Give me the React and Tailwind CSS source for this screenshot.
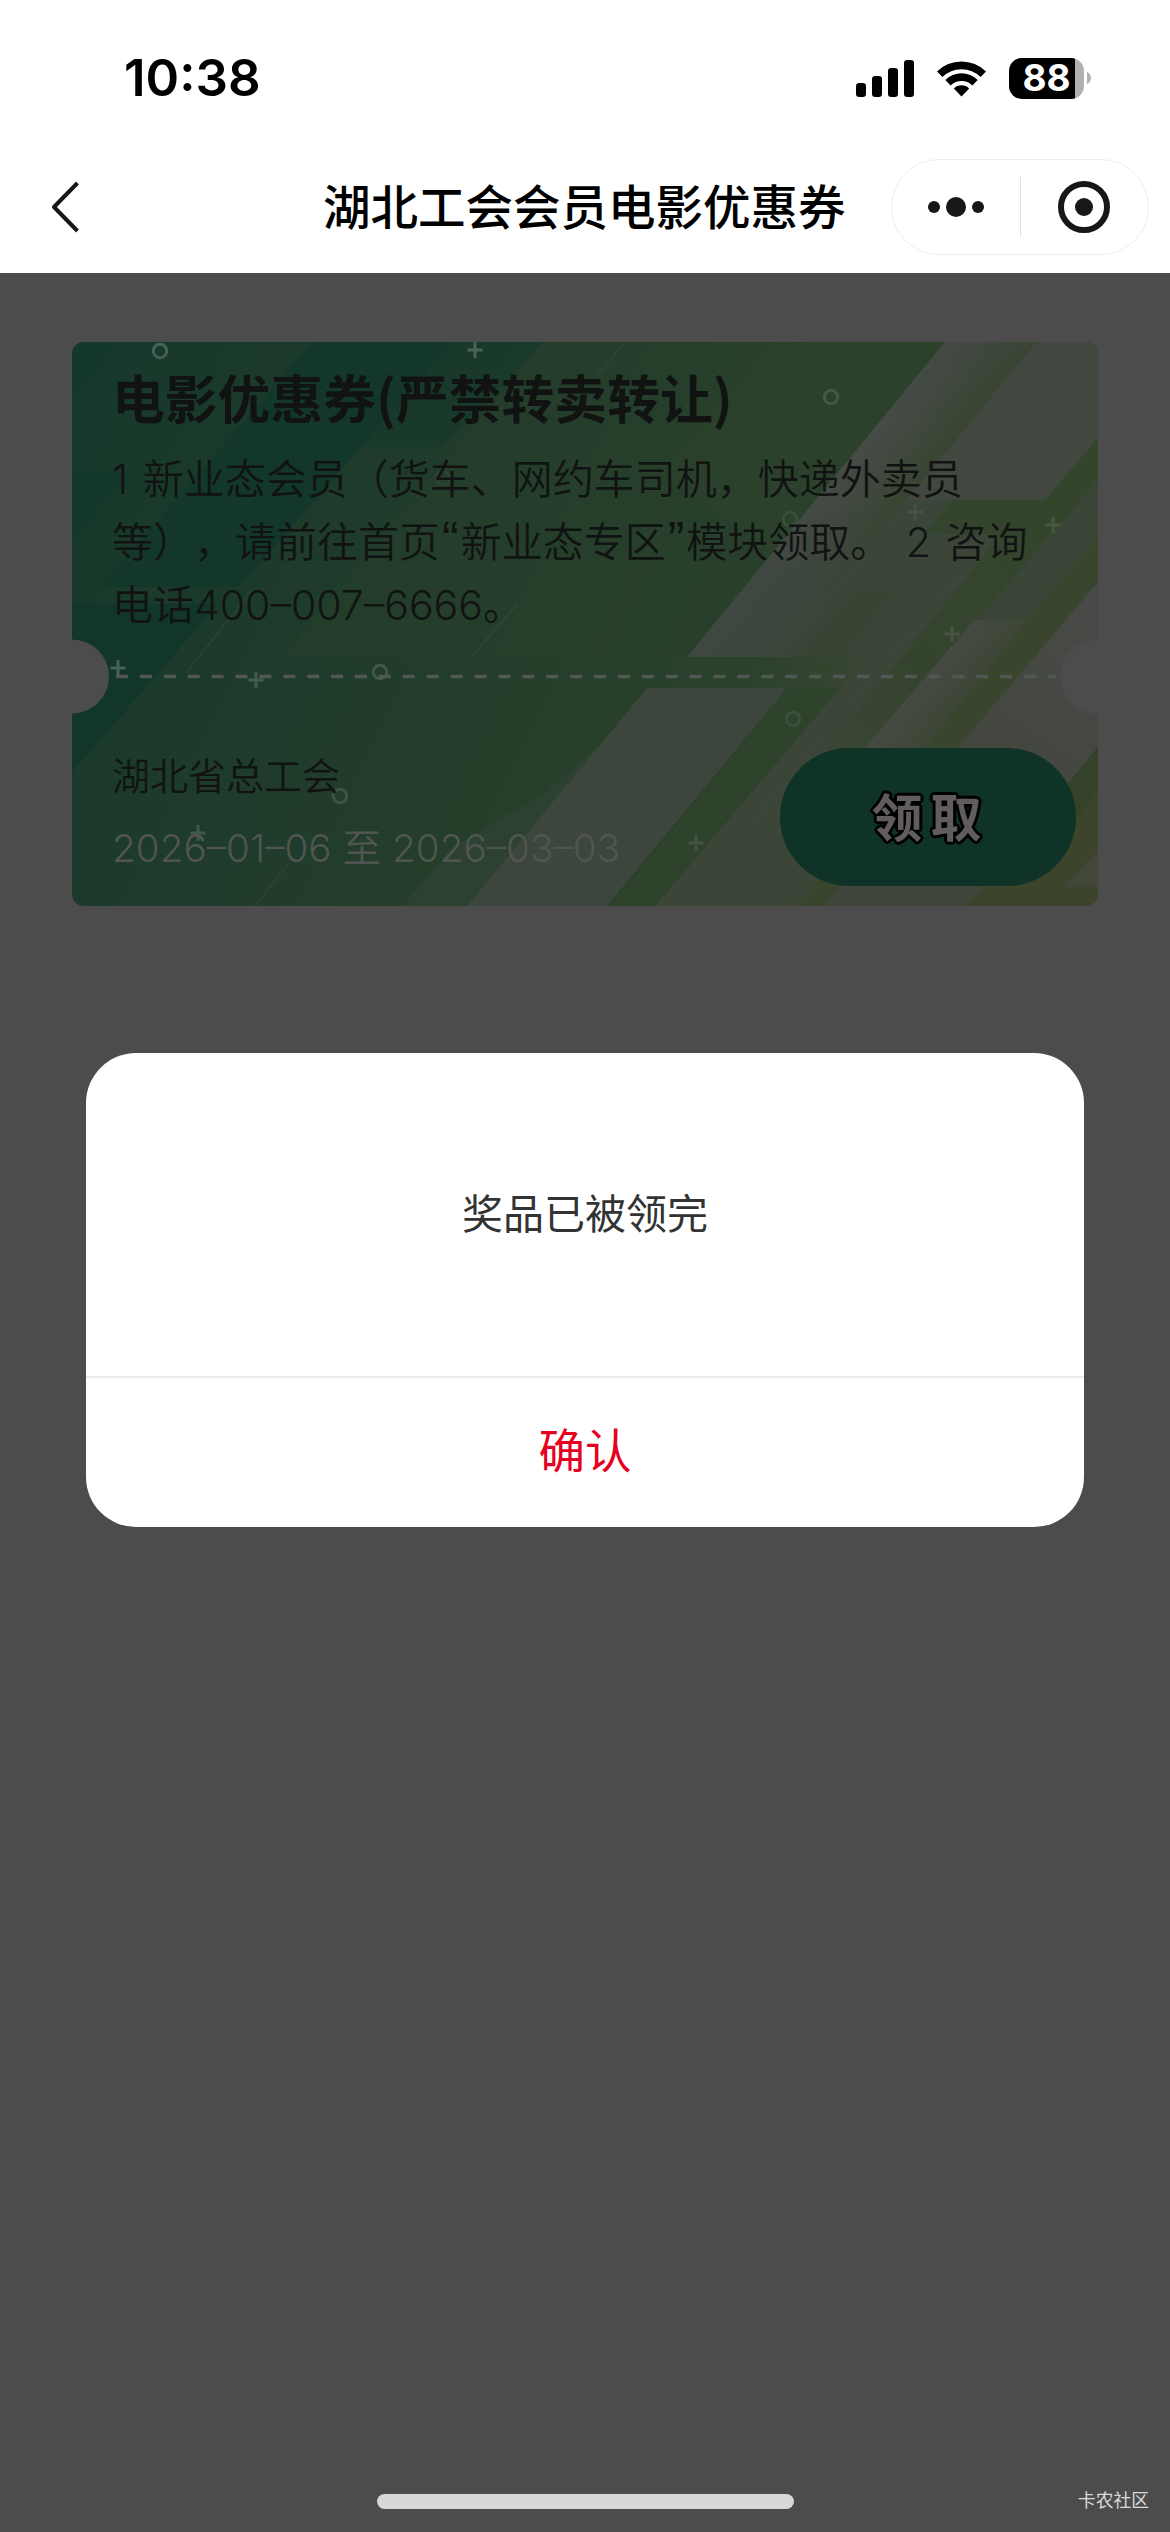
const CJK = "font-['Inter','Noto_Sans_CJK_SC',sans-serif]";

const rings = [
  [88, 9, 0.2], [759, 55, 0.12], [718, 177, 0.07], [308, 330, 0.15],
  [268, 454, 0.13], [721, 377, 0.07], [371, 136, 0.04],
];
const pluses = [
  [403, 8, 0.22], [843, 170, 0.07], [981, 183, 0.1], [880, 292, 0.09],
  [46, 326, 0.22], [184, 338, 0.16], [126, 491, 0.15], [624, 501, 0.11],
];

function StatusBar() {
  return (
    <div className="flex h-[141px] items-center justify-between pt-[15px] pr-[79px] pl-[124px]">
      <span className="font-['Inter'] text-[51px] leading-[60px] font-semibold">10:38</span>
      <div className="flex items-center">
        <svg width="58" height="38" viewBox="0 0 58 38" className="mr-[22px]">
          <rect x="0" y="24" width="10" height="14" rx="3.2" />
          <rect x="16" y="17" width="10" height="21" rx="3.2" />
          <rect x="32" y="9" width="10" height="29" rx="3.2" />
          <rect x="48" y="1" width="10" height="37" rx="3.2" />
        </svg>
        <svg width="51" height="38" viewBox="0 0 51 38" className="mr-[22px]">
          <path d="M1 12.5 A35 35 0 0 1 50 12.5 L44.6 18 A27.3 27.3 0 0 0 6.4 18 Z" />
          <path d="M9.3 21 A23 23 0 0 1 41.7 21 L36.3 26.4 A15.3 15.3 0 0 0 14.7 26.4 Z" />
          <path d="M17.8 29.4 A11 11 0 0 1 33.2 29.4 L25.5 37.5 Z" />
        </svg>
        <div className="flex h-[41px] w-[75px] items-center justify-center rounded-[13px] bg-[linear-gradient(90deg,#000_66px,#b1b1b1_66px)]">
          <span className="font-['Inter'] text-[37px] leading-[48px] font-bold text-white">88</span>
        </div>
        <svg width="4" height="12" viewBox="0 0 4 12" className="ml-[3px]">
          <path d="M0 0 C5.3 2 5.3 10 0 12 Z" fill="#b1b1b1" />
        </svg>
      </div>
    </div>
  );
}

function NavBar() {
  return (
    <div className="flex h-[132px] items-center pr-[21px] pl-[50px]">
      <svg width="31" height="52" viewBox="0 0 31 52" fill="none" stroke="#171717" strokeWidth="4">
        <path d="M27.500 2 L4 26 L27.500 50" strokeLinejoin="round" />
      </svg>
      <h1 className={`${CJK} ml-[242px] pt-[2px] text-[47.500px] leading-[60px] font-medium whitespace-nowrap text-black`}>
        湖北工会会员电影优惠券
      </h1>
      <div className="ml-auto flex h-[96px] w-[258px] items-center rounded-full border-[1.500px] border-[#ededed]">
        <div className="flex flex-1 items-center justify-center gap-[6px]">
          <span className="size-[12px] rounded-full bg-[#171717]" />
          <span className="size-[20px] rounded-full bg-[#171717]" />
          <span className="size-[12px] rounded-full bg-[#171717]" />
        </div>
        <span className="h-[60px] w-px bg-[#e0e0e0]" />
        <div className="flex flex-1 items-center justify-center">
          <span className="flex size-[52px] items-center justify-center rounded-full border-[6px] border-[#171717]">
            <span className="size-[18px] rounded-full bg-[#171717]" />
          </span>
        </div>
      </div>
    </div>
  );
}

function CouponArt() {
  return (
    <svg className="absolute inset-0" width="1026" height="564" viewBox="0 0 1026 564">
      <defs>
        <linearGradient id="base" gradientUnits="userSpaceOnUse" x1="0" y1="120" x2="900" y2="564">
          <stop offset="0" stopColor="#17392b" />
          <stop offset="0.3" stopColor="#1f3b2b" />
          <stop offset="0.62" stopColor="#28402a" />
          <stop offset="1" stopColor="#3a442b" />
        </linearGradient>
        <linearGradient id="pale" gradientUnits="userSpaceOnUse" x1="700" y1="180" x2="960" y2="400">
          <stop offset="0" stopColor="#404843" />
          <stop offset="0.3" stopColor="#3b463a" />
          <stop offset="1" stopColor="#3c4535" />
        </linearGradient>
        <linearGradient id="shine" gradientUnits="userSpaceOnUse" x1="790" y1="100" x2="850" y2="149">
          <stop offset="0" stopColor="#464b46" />
          <stop offset="0.35" stopColor="#424940" />
          <stop offset="1" stopColor="#37452f" />
        </linearGradient>
        <linearGradient id="shineFade" x1="0" y1="0" x2="0" y2="1">
          <stop offset="0" stopColor="#999" />
          <stop offset="0.3" stopColor="#fff" />
          <stop offset="0.6" stopColor="#fff" />
          <stop offset="1" stopColor="#000" />
        </linearGradient>
        <mask id="fade"><rect x="600" y="0" width="426" height="250" fill="url(#shineFade)" /></mask>
        <linearGradient id="shine2" gradientUnits="userSpaceOnUse" x1="850" y1="338" x2="905" y2="384">
          <stop offset="0" stopColor="#454a42" />
          <stop offset="0.5" stopColor="#3e4738" />
          <stop offset="1" stopColor="#3b4631" />
        </linearGradient>
        <linearGradient id="pane" gradientUnits="userSpaceOnUse" x1="1026" y1="250" x2="820" y2="564">
          <stop offset="0" stopColor="#494a48" />
          <stop offset="0.5" stopColor="#43473f" />
          <stop offset="1" stopColor="#40463c" />
        </linearGradient>
        <linearGradient id="bar" x1="0" y1="0" x2="1" y2="0">
          <stop offset="0" stopColor="#27402b" />
          <stop offset="0.55" stopColor="#2d422d" />
          <stop offset="1" stopColor="#394633" />
        </linearGradient>
        <linearGradient id="band" gradientUnits="userSpaceOnUse" x1="1026" y1="96" x2="760" y2="420">
          <stop offset="0" stopColor="#33452b" />
          <stop offset="0.7" stopColor="#35442f" />
          <stop offset="1" stopColor="#3a4635" />
        </linearGradient>
      </defs>
      <rect width="1026" height="564" fill="url(#base)" />
      <polygon points="471,0 873,0 615,315 210,315" fill="#28402c" opacity="0.5" />
      <polygon points="241,0 380,0 167,245 28,245" fill="#13372a" />
      <polygon points="380,0 471,0 370,105 289,105" fill="#15382b" opacity="0.6" />
      <polygon points="0,130 62,130 0,205" fill="#14382a" />
      <polygon points="0,0 50,0 0,58" fill="#14382a" />
      <polygon points="0,262 146,262 0,430" fill="#12362a" />
      <polygon points="700,0 873,0 700,210 590,130" fill="#2f432c" opacity="0.4" />

      <polygon points="873,0 1026,0 1026,564 583,564 768,346 795,315 615,315" fill="url(#pale)" />
      <polygon points="873,0 964,0 759,250 668,250" fill="url(#shine)" mask="url(#fade)" />
      <polygon points="964,0 1026,0 1026,96 973,158 835,158" fill="#424740" />
      <polygon points="1026,96 973,158 880,158 852,192 930,192 755,406 782,422 1026,138" fill="url(#band)" />
      <polygon points="590,315 795,315 768,346 565,346" fill="url(#bar)" />
      <polygon points="780,250 825,250 768,322 700,400 672,380 720,320" fill="#34442f" opacity="0.35" />

      <polygon points="475,450 530,400 399,564 331,564 380,505" fill="#37443a" opacity="0.45" />
      <polygon points="575,346 715,346 535,564 395,564" fill="#3c463d" />
      <polygon points="530,430 560,430 478,564 458,564 450,528" fill="#434a44" opacity="0.3" />
      <polygon points="715,346 768,346 583,564 539,564" fill="#2e422c" />

      <polygon points="902,278 960,278 852,406 793,406" fill="url(#shine2)" />
      <polygon points="955,278 1026,196 1026,240 752,564 726,564" fill="#39462b" opacity="0.75" />
      <polygon points="1026,240 1026,405 895,564 752,564" fill="url(#pane)" />
      <polygon points="1026,405 1026,564 895,564" fill="#3c442b" />
      <polygon points="1026,405 1026,450 960,530 925,530" fill="#35422a" />
      <polygon points="1026,508 1026,545 992,545" fill="#43473a" />

      <g stroke="#fff" strokeWidth="1.500" opacity="0.04">
        <path d="M553 0 L525 34" /><path d="M446 261 L399 315" />
        <path d="M180 248 L114 331" /><path d="M217 521 L183 564" />
      </g>
      <g fill="none" stroke="#fff" strokeWidth="3">
        {rings.map(([x, y, o]) => <circle key={`${x}-${y}`} cx={x} cy={y} r="6.700" opacity={o} />)}
        {pluses.map(([x, y, o]) => (
          <path key={`${x}-${y}`} d={`M${x - 7.5} ${y} H${x + 7.5} M${x} ${y - 8} V${y + 8}`} opacity={o} />
        ))}
      </g>
      <path d="M44 334.500 H984" stroke="#515853" strokeWidth="3.500" strokeDasharray="12 11.900" />
      <circle cx="0" cy="334.500" r="37" fill="#4c4c4c" />
      <circle cx="1026" cy="334.500" r="37.500" fill="#4c4c4c" />
    </svg>
  );
}

function Coupon() {
  return (
    <section className={`${CJK} relative mx-[72px] mt-[69px] h-[564px] w-[1026px] overflow-hidden rounded-[12px] text-[#111312] [text-spacing-trim:space-all]`}>
      <CouponArt />
      <div className="relative flex h-full flex-col pl-[40px]">
        <h2 className="mt-[19px] font-['Noto_Sans_CJK_SC',sans-serif] text-[52.800px] leading-[70px] font-bold whitespace-nowrap">
          电影优惠券(严禁转卖转让)
        </h2>
        <div className="mt-[17px] text-[41px] leading-[63px] font-[350] [word-spacing:3px] whitespace-pre">
          <p>1 新业态会员（货车、网约车司机，快递外卖员</p>
          <p>等），请前往首页<span className="px-[2px] font-['Liberation_Sans'] text-[50px] leading-[50px]">“</span>新业态专区<span className="px-[2px] font-['Liberation_Sans'] text-[50px] leading-[50px]">”</span>模块领取。 2 咨询</p>
          <p>电话400–007–6666。</p>
        </div>
        <div className="mt-[111px] flex">
          <div className="w-[668px] font-[350]">
            <p className="text-[38px] leading-[56px]">湖北省总工会</p>
            <p className="mt-[16px] text-[38.700px] leading-[56px] whitespace-pre text-[#505551]">2026–01–06 至 2026–03–03</p>
          </div>
          <button className="flex h-[138px] w-[296px] items-center justify-center rounded-full bg-[#103328] pt-[5px] pl-[5px] text-[51px] font-bold tracking-[8px] text-[#605c5f] [text-shadow:3px_0_#000,-3px_0_#000,0_3px_#000,0_-3px_#000,2px_2px_#000,-2px_-2px_#000,2px_-2px_#000,-2px_2px_#000]">
            领取
          </button>
        </div>
      </div>
    </section>
  );
}

function Dialog() {
  return (
    <div role="dialog" className={`${CJK} mx-[86px] mt-[147px] flex h-[474px] w-[998px] flex-col overflow-hidden rounded-[50px] bg-white`}>
      <p className="flex h-[323px] items-center justify-center text-[41px] text-[#333]">奖品已被领完</p>
      <button className="flex flex-1 items-center justify-center border-t-2 border-[#ebebeb] pb-[2px] text-[46.500px] text-[#e60021]">确认</button>
    </div>
  );
}

export default function App() {
  return (
    <div className="flex h-[2532px] w-[1170px] flex-col overflow-hidden bg-[#4c4c4c]">
      <header className="h-[273px] bg-white text-black">
        <StatusBar />
        <NavBar />
      </header>
      <Coupon />
      <Dialog />
      <footer className="mt-auto flex h-[62px] items-center pr-[21px] pl-[377px]">
        <div className="h-[15px] w-[417px] rounded-full bg-[#d8d8d8]" />
        <span className={`${CJK} ml-auto text-[17.800px] leading-[24px] text-[#dadada]`}>卡农社区</span>
      </footer>
    </div>
  );
}
